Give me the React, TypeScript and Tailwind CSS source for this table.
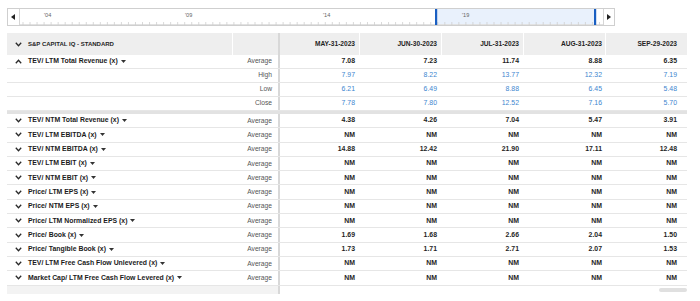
import React from 'react';

type Row = {
  label: string;
  kind: string;
  values: string[];
  open?: boolean;
  blue?: boolean;
  sub?: boolean;
};

const dates = ['MAY-31-2023', 'JUN-30-2023', 'JUL-31-2023', 'AUG-31-2023', 'SEP-29-2023'];
const colW = ['w-[79px] pr-[4px]', 'w-[82px] pr-[4px]', 'w-[82px] pr-[4px]', 'w-[82px] pr-[3px]', 'w-[82px] pr-[10px]'];
const NM = ['NM', 'NM', 'NM', 'NM', 'NM'];

const group1: Row[] = [
  { label: 'TEV/ LTM Total Revenue (x)', kind: 'Average', open: true, values: ['7.08', '7.23', '11.74', '8.88', '6.35'] },
  { label: '', kind: 'High', sub: true, blue: true, values: ['7.97', '8.22', '13.77', '12.32', '7.19'] },
  { label: '', kind: 'Low', sub: true, blue: true, values: ['6.21', '6.49', '8.88', '6.45', '5.48'] },
  { label: '', kind: 'Close', sub: true, blue: true, values: ['7.78', '7.80', '12.52', '7.16', '5.70'] },
];

const group2: Row[] = [
  { label: 'TEV/ NTM Total Revenue (x)', kind: 'Average', values: ['4.38', '4.26', '7.04', '5.47', '3.91'] },
  { label: 'TEV/ LTM EBITDA (x)', kind: 'Average', values: NM },
  { label: 'TEV/ NTM EBITDA (x)', kind: 'Average', values: ['14.88', '12.42', '21.90', '17.11', '12.48'] },
  { label: 'TEV/ LTM EBIT (x)', kind: 'Average', values: NM },
  { label: 'TEV/ NTM EBIT (x)', kind: 'Average', values: NM },
  { label: 'Price/ LTM EPS (x)', kind: 'Average', values: NM },
  { label: 'Price/ NTM EPS (x)', kind: 'Average', values: NM },
  { label: 'Price/ LTM Normalized EPS (x)', kind: 'Average', values: NM },
  { label: 'Price/ Book (x)', kind: 'Average', values: ['1.69', '1.68', '2.66', '2.04', '1.50'] },
  { label: 'Price/ Tangible Book (x)', kind: 'Average', values: ['1.73', '1.71', '2.71', '2.07', '1.53'] },
  { label: 'TEV/ LTM Free Cash Flow Unlevered (x)', kind: 'Average', values: NM },
  { label: 'Market Cap/ LTM Free Cash Flow Levered (x)', kind: 'Average', values: NM },
];

const Chevron = ({ up }: { up?: boolean }) => (
  <svg width="7" height="5" viewBox="0 0 7 5" className="block">
    <path
      d={up ? 'M0.8 4.2 L3.5 1.2 L6.2 4.2' : 'M0.8 0.8 L3.5 3.8 L6.2 0.8'}
      fill="none"
      stroke="#2a2a2a"
      strokeWidth="1.3"
    />
  </svg>
);

const Caret = () => (
  <svg width="5" height="3" viewBox="0 0 5 3" className="ml-[3px] inline-block">
    <path d="M0 0 L5 0 L2.5 3 Z" fill="#333" />
  </svg>
);

const DataRow = ({ row, tall }: { row: Row; tall?: boolean }) => (
  <div className={`flex border-b border-[#e6e6e6] ${tall ? 'h-[14.3px]' : 'h-[14px]'}`}>
    <div className="flex w-[273px] items-center border-r-2 border-[#d8d8d8]">
      <div className="flex w-[21px] justify-center pl-[1px]">
        {!row.sub && <Chevron up={row.open} />}
      </div>
      <div className="flex flex-1 items-center text-[6.9px] font-bold text-[#1b1b1b]">
        {row.label}
        {row.label && <Caret />}
      </div>
      <div className="w-[46px] pr-[6px] text-right text-[6.7px] text-[#555]">{row.kind}</div>
    </div>
    {row.values.map((v, i) => (
      <div
        key={i}
        className={`${colW[i]} flex items-center justify-end text-[6.9px] ${row.blue ? 'text-[#3d86cf]' : 'font-bold text-[#1e1e1e]'}`}
      >
        {v}
      </div>
    ))}
  </div>
);

const Slider = () => {
  const ticks: number[] = [];
  for (let x = 3; x < 582; x += 7.03) ticks.push(x);
  const labels = [
    { t: "'04", x: 24 },
    { t: "'09", x: 165 },
    { t: "'14", x: 303 },
    { t: "'19", x: 442 },
  ];
  return (
    <div className="ml-[7px] mt-[8px] flex h-[18px] w-[608px] border border-[#cfcfcf] bg-white">
      <div className="flex w-[12px] items-center justify-center border-r border-[#d6d6d6]">
        <svg width="4" height="6" viewBox="0 0 4 6">
          <path d="M4 0 L0 3 L4 6 Z" fill="#222" />
        </svg>
      </div>
      <div className="flex-1">
        <svg width="583" height="16" viewBox="0 0 583 16" className="block">
          <rect x="416" y="0" width="160" height="16" fill="#e9f1fc" />
          <line x1="0" y1="15.5" x2="583" y2="15.5" stroke="#e2e2e2" />
          {ticks.map((x, i) => (
            <line key={i} x1={x} y1="13" x2={x} y2="16" stroke="#cfcfcf" strokeWidth="0.8" />
          ))}
          {labels.map((l) => (
            <text key={l.t} x={l.x} y="8" fontSize="5.6" fill="#666" fontFamily="'Liberation Sans', Arial, sans-serif">
              {l.t}
            </text>
          ))}
          <rect x="415" y="0" width="2.2" height="16" fill="#1a5fc2" />
          <rect x="574" y="0" width="2.2" height="16" fill="#1a5fc2" />
        </svg>
      </div>
      <div className="flex w-[12px] items-center justify-center border-l border-[#d6d6d6]">
        <svg width="4" height="6" viewBox="0 0 4 6">
          <path d="M0 0 L4 3 L0 6 Z" fill="#222" />
        </svg>
      </div>
    </div>
  );
};

export default function App() {
  return (
    <div className="h-[301px] w-[700px] overflow-hidden bg-white font-['Liberation_Sans',Arial,sans-serif]">
      <Slider />
      <div className="ml-[7px] mt-[7px] w-[680px]">
        {/* header */}
        <div className="flex h-[22px] bg-[#eeeeee]">
          <div className="flex w-[273px] items-center border-r-2 border-[#d8d8d8]">
            <div className="flex w-[21px] justify-center pl-[1px]">
              <Chevron />
            </div>
            <div className="w-[204px] text-[6px] font-bold text-[#1e1e1e]">S&amp;P CAPITAL IQ - STANDARD</div>
            <div className="h-full w-[46px] border-l border-white" />
          </div>
          {dates.map((d, i) => (
            <div
              key={d}
              className={`${colW[i]} flex items-center justify-end text-[6.6px] font-bold text-[#1e1e1e] ${i > 0 ? 'border-l border-white' : ''}`}
            >
              {d}
            </div>
          ))}
        </div>
        {group1.map((r, i) => (
          <DataRow key={i} row={r} />
        ))}
        <div className="h-[3px] bg-[#e2e2e2]" />
        {group2.map((r, i) => (
          <DataRow key={i} row={r} tall />
        ))}
        {/* scroll strip */}
        <div className="flex h-[8px]">
          <div className="w-[273px] border-r-2 border-[#d8d8d8] bg-[#f3f3f3]" />
          <div className="flex flex-1 items-center justify-end">
            <div className="h-[4px] w-[28px] rounded-full bg-[#e0e0e0]" />
          </div>
        </div>
      </div>
    </div>
  );
}
